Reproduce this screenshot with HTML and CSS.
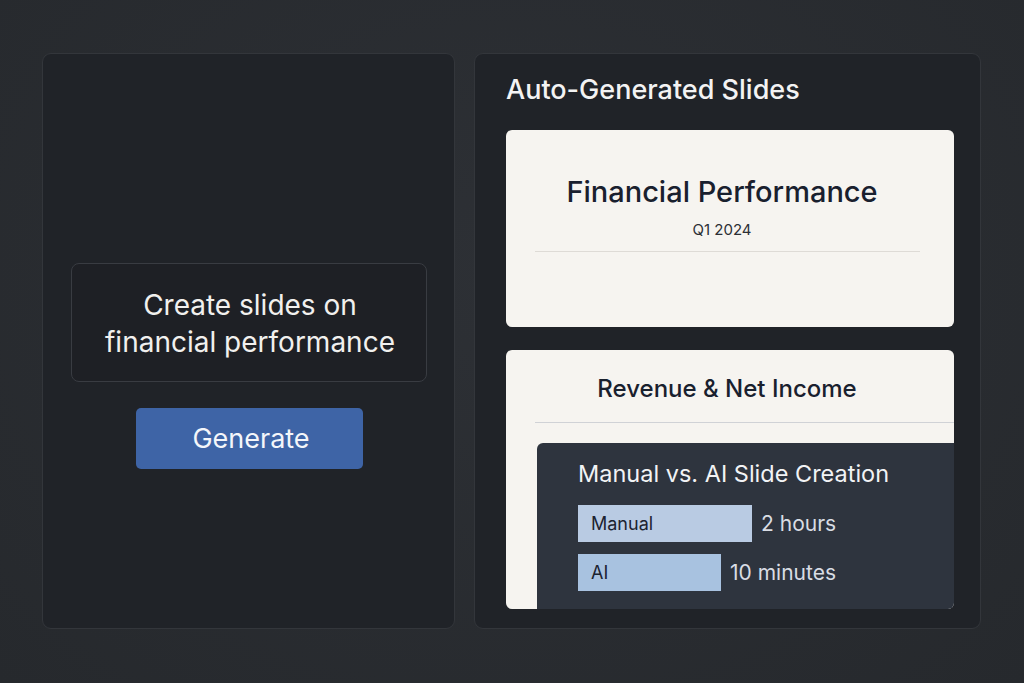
FILE: index.html
```html
<!DOCTYPE html>
<html lang="en">
<head>
    <meta charset="UTF-8">
    <meta name="viewport" content="width=device-width, initial-scale=1.0">
    <title>Auto-Generated Slides</title>
    <link rel="stylesheet" href="styles.css">
</head>
<body>
    <section class="panel panel-prompt">
        <div class="prompt-box">Create slides on<br>financial performance</div>
        <button class="generate-btn">Generate</button>
    </section>

    <section class="panel panel-slides">
        <h2 class="panel-title">Auto-Generated Slides</h2>

        <div class="slide slide-title">
            <h3>Financial Performance</h3>
            <p class="slide-sub">Q1 2024</p>
            <hr class="slide-rule">
        </div>

        <div class="slide slide-chart">
            <h3>Revenue &amp; Net Income</h3>
            <hr class="slide-rule wide">
            <div class="compare-card">
                <h4>Manual vs. AI Slide Creation</h4>
                <div class="bar-row">
                    <span class="bar bar-manual" style="width: 174px">Manual</span>
                    <span class="bar-value">2 hours</span>
                </div>
                <div class="bar-row">
                    <span class="bar bar-ai" style="width: 143px">AI</span>
                    <span class="bar-value">10 minutes</span>
                </div>
            </div>
        </div>
    </section>
</body>
</html>
```

FILE: styles.css
```css
/* General */
html, body {
    height: 100%;
}

body {
    margin: 0;
    padding: 53px 43px 54px 42px;
    box-sizing: border-box;
    display: flex;
    gap: 19px;
    font-family: Inter, "Noto Sans", sans-serif;
    background: radial-gradient(ellipse at 50% 40%, #2d3035, #26292d);
    color: #f2f2f2;
}

/* Panels */
.panel {
    background-color: #202328;
    border: 1px solid #33363b;
    border-radius: 9px;
    box-sizing: border-box;
}

.panel-prompt {
    width: 413px;
    display: flex;
    flex-direction: column;
    align-items: center;
    padding: 209px 27px 0 28px;
}

.prompt-box {
    width: 100%;
    height: 119px;
    box-sizing: border-box;
    border: 1px solid #393c42;
    border-radius: 8px;
    background-color: #1e2025;
    display: flex;
    align-items: center;
    justify-content: center;
    text-align: center;
    font-size: 28px;
    line-height: 37px;
    color: #f1f0ee;
    padding: 2px 0 0 2px;
}

.generate-btn {
    margin-top: 26px;
    width: 227px;
    height: 61px;
    border: none;
    border-radius: 5px;
    background-color: #3e64a6;
    color: #f4f6fa;
    font-family: inherit;
    font-size: 27px;
    padding: 0 0 0 4px;
    cursor: pointer;
}

.panel-slides {
    flex: 1;
    padding: 17px 26px 0 31px;
    display: flex;
    flex-direction: column;
    overflow: hidden;
}

.panel-title {
    margin: 0 0 21px;
    font-size: 27px;
    font-weight: 500;
    line-height: 38px;
    color: #f3f3f3;
}

/* Slides */
.slide {
    background-color: #f6f4f0;
    border-radius: 6px;
    color: #19202e;
    text-align: center;
    overflow: hidden;
    flex-shrink: 0;
}

.slide h3 {
    margin: 0;
    font-weight: 500;
}

.slide-title {
    height: 197px;
    padding: 44px 16px 0 0;
    box-sizing: border-box;
}

.slide-title h3 {
    font-size: 29px;
    line-height: 36px;
}

.slide-sub {
    margin: 10px 0 0;
    font-size: 15px;
    color: #2c2f35;
}

.slide-rule {
    border: none;
    border-top: 1px solid #dedbd6;
    margin: 12px 18px 0 29px;
}

.slide-rule.wide {
    margin: 18px 0 0 29px;
    border-top-color: #d0d2d6;
}

.slide-chart {
    margin-top: 23px;
    height: 259px;
    padding-top: 24px;
    box-sizing: border-box;
}

.slide-chart h3 {
    font-size: 24px;
    line-height: 30px;
    padding-right: 6px;
}

/* Comparison card */
.compare-card {
    margin: 20px 0 0 31px;
    height: 200px;
    background-color: #2e343e;
    border-radius: 6px 0 0 0;
    padding: 16px 0 0 41px;
    box-sizing: border-box;
    text-align: left;
    color: #f2f3f5;
}

.compare-card h4 {
    margin: 0 0 16px;
    font-size: 23.5px;
    font-weight: 400;
    line-height: 30px;
}

.bar-row {
    display: flex;
    align-items: center;
    gap: 9px;
    margin-bottom: 12px;
}

.bar {
    height: 37px;
    display: flex;
    align-items: center;
    padding-left: 13px;
    box-sizing: border-box;
    font-size: 18px;
    color: #1c2330;
}

.bar-manual {
    background-color: #b9cbe3;
}

.bar-ai {
    background-color: #a8c2e0;
}

.bar-value {
    font-size: 21px;
    color: #d9dde4;
}
```
